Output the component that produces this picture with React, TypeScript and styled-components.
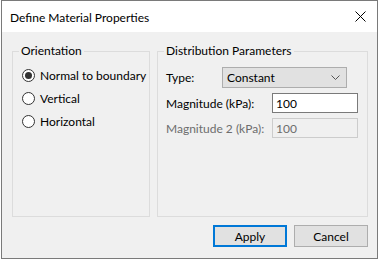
import React from 'react'
import styled, { createGlobalStyle } from 'styled-components'

const Global = createGlobalStyle`
  html, body {
    margin: 0;
    background: #ffffff;
  }
  body {
    font-family: Lato, 'Liberation Sans', sans-serif;
    font-size: 12px;
    color: #000;
  }
`

const orientations = ['Normal to boundary', 'Vertical', 'Horizontal']

const App = () => {
  return (
    <>
      <Global />
      <Window>
        <TitleBar>
          <span>Define Material Properties</span>
          <CloseIcon viewBox="0 0 11 11">
            <path d="M0.5 0.5 L10.5 10.5 M10.5 0.5 L0.5 10.5" stroke="#000" strokeWidth="1" />
          </CloseIcon>
        </TitleBar>
        <Body>
          <Groups>
            <Group $width={138}>
              <Legend>Orientation</Legend>
              <RadioList>
                {orientations.map((o, i) => (
                  <RadioRow key={o}>
                    <Radio $checked={i === 0} />
                    {o}
                  </RadioRow>
                ))}
              </RadioList>
            </Group>
            <Group $width={211}>
              <Legend>Distribution Parameters</Legend>
              <Fields>
                <FieldRow>
                  <Label $width={56}>Type:</Label>
                  <Combo>
                    <span>Constant</span>
                    <svg width="9" height="5" viewBox="0 0 9 5">
                      <path d="M0.5 0.5 L4.5 4.5 L8.5 0.5" fill="none" stroke="#555" strokeWidth="1" />
                    </svg>
                  </Combo>
                </FieldRow>
                <FieldRow>
                  <Label $width={106}>Magnitude (kPa):</Label>
                  <TextBox>100</TextBox>
                </FieldRow>
                <FieldRow>
                  <Label $width={106} $disabled>Magnitude 2 (kPa):</Label>
                  <TextBox $disabled>100</TextBox>
                </FieldRow>
              </Fields>
            </Group>
          </Groups>
          <Buttons>
            <Button $primary>Apply</Button>
            <Button>Cancel</Button>
          </Buttons>
        </Body>
      </Window>
    </>
  )
}

const Window = styled.div`
  margin-left: 1px;
  width: 375px;
  height: 257px;
  border: 1px solid #7a7a7a;
  display: flex;
  flex-direction: column;
  background: #f0f0f0;
  white-space: nowrap;
`
const TitleBar = styled.div`
  height: 31px;
  background: #ffffff;
  display: flex;
  align-items: center;
  justify-content: space-between;
  padding: 0 11px 0 8px;
  font-size: 12px;
  span {
    margin-top: 1px;
  }
`
const CloseIcon = styled.svg`
  width: 11px;
  height: 11px;
`
const Body = styled.div`
  flex: 1;
  display: flex;
  flex-direction: column;
  padding: 11px 9px 0 10px;
`
const Groups = styled.div`
  display: flex;
  gap: 7px;
`
const Group = styled.fieldset<{ $width: number }>`
  box-sizing: border-box;
  width: ${(p) => p.$width}px;
  height: 174px;
  margin: 0;
  padding: 0;
  border: 1px solid #dcdcdc;
`
const Legend = styled.legend`
  margin-left: 6px;
  padding: 0 2px;
  font-size: 12px;
  line-height: 16px;
`
const RadioList = styled.div`
  display: flex;
  flex-direction: column;
  gap: 6px;
  padding: 8px 0 0 9px;
`
const RadioRow = styled.div`
  display: flex;
  align-items: center;
  gap: 5px;
  height: 17px;
`
const Radio = styled.span<{ $checked?: boolean }>`
  box-sizing: border-box;
  width: 13px;
  height: 13px;
  border-radius: 50%;
  border: 1px solid #333;
  background: #fff;
  display: flex;
  align-items: center;
  justify-content: center;
  &::after {
    content: '';
    width: 7px;
    height: 7px;
    border-radius: 50%;
    background: #333;
    display: ${(p) => (p.$checked ? 'block' : 'none')};
  }
`
const Fields = styled.div`
  display: flex;
  flex-direction: column;
  gap: 5px;
  padding: 8px 0 0 8px;
`
const FieldRow = styled.div`
  display: flex;
  align-items: center;
`
const Label = styled.span<{ $width: number; $disabled?: boolean }>`
  width: ${(p) => p.$width}px;
  color: ${(p) => (p.$disabled ? '#6d6d6d' : '#000')};
`
const Combo = styled.div`
  box-sizing: border-box;
  width: 125px;
  height: 21px;
  border: 1px solid #adadad;
  background: #e1e1e1;
  display: flex;
  align-items: center;
  justify-content: space-between;
  padding: 0 6px 0 4px;
`
const TextBox = styled.div<{ $disabled?: boolean }>`
  box-sizing: border-box;
  width: 86px;
  height: 20px;
  border: 1px solid ${(p) => (p.$disabled ? '#cccccc' : '#7a7a7a')};
  background: ${(p) => (p.$disabled ? '#f0f0f0' : '#ffffff')};
  color: ${(p) => (p.$disabled ? '#6d6d6d' : '#000')};
  display: flex;
  align-items: center;
  padding-left: 3px;
`
const Buttons = styled.div`
  display: flex;
  justify-content: flex-end;
  gap: 7px;
  margin-top: 8px;
`
const Button = styled.button<{ $primary?: boolean }>`
  box-sizing: border-box;
  width: 74px;
  height: 22px;
  margin: 0;
  padding: 0;
  font-family: inherit;
  font-size: 12px;
  color: #000;
  background: #e1e1e1;
  border: ${(p) => (p.$primary ? '2px solid #0078d7' : '1px solid #adadad')};
`

export default App
